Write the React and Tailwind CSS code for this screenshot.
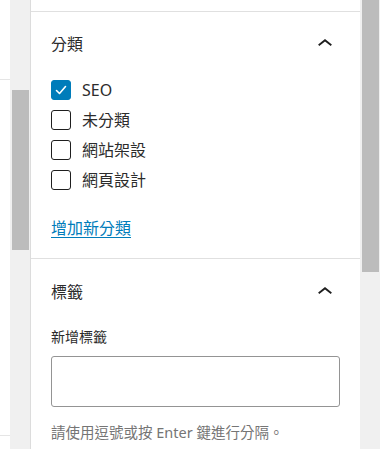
const font = { fontFamily: '"Noto Sans", "Noto Sans CJK TC", sans-serif' };

const Check = ({ checked, label }) => (
  <label className="flex items-center h-[20px] gap-[11px]">
    <span
      className={`w-[20px] h-[20px] rounded-[3px] flex items-center justify-center shrink-0 ${
        checked ? "bg-[#007cba] border border-[#007cba]" : "border-[1.5px] border-[#1e1e1e] bg-white"
      }`}
    >
      {checked && (
        <svg width="16" height="16" viewBox="0 0 16 16" fill="none">
          <path d="M3.5 8.5l3 3 6-7" stroke="#fff" strokeWidth="1.6" strokeLinecap="round" strokeLinejoin="round" />
        </svg>
      )}
    </span>
    <span className="text-[16px] leading-[20px] text-[#2c2c2c]">{label}</span>
  </label>
);

const Chevron = () => (
  <svg width="30" height="30" viewBox="0 0 24 24" className="fill-[#1e1e1e]">
    <path d="M6.5 12.4L12 8l5.5 4.4-.9 1.2L12 10l-4.6 3.6-.9-1.2z" />
  </svg>
);

const PanelHead = ({ title }) => (
  <div className="flex items-center justify-between h-[24px] pr-[20px]">
    <span className="text-[16px] leading-[24px] text-[#2c2c2c]">{title}</span>
    <Chevron />
  </div>
);

export default function App() {
  return (
    <div className="w-[380px] h-[449px] overflow-hidden flex bg-white" style={font}>
      {/* left edge of the editor canvas */}
      <div className="w-[10px] flex flex-col">
        <div className="h-[80px] border-b border-[#e5e5e5]" />
        <div className="h-[356px] border-b border-[#e5e5e5]" />
      </div>
      {/* canvas scrollbar */}
      <div className="w-[20px] bg-[#f0f0f0] pt-[90px] pl-[2px]">
        <div className="w-[17px] h-[160px] bg-[#bcbcbc]" />
      </div>
      {/* sidebar */}
      <div className="w-[330px] border-l border-[#dcdcdc] flex flex-col">
        <div className="h-[12px] border-b border-[#e0e0e0] shrink-0" />
        <section className="pl-[20px] pt-[20px] pb-[20px] border-b border-[#e0e0e0]">
          <PanelHead title="分類" />
          <div className="mt-[24px] flex flex-col gap-[10px]">
            <Check checked label="SEO" />
            <Check label="未分類" />
            <Check label="網站架設" />
            <Check label="網頁設計" />
          </div>
          <a href="#" className="block mt-[28px] text-[16px] leading-[20px] text-[#007cba] underline underline-offset-[3px]">
            增加新分類
          </a>
        </section>
        <section className="pl-[20px] pt-[21px]">
          <PanelHead title="標籤" />
          <div className="mt-[23px] text-[14px] leading-[20px] text-[#2c2c2c]">新增標籤</div>
          <div className="mt-[9px] w-[289px] h-[51px] border border-[#949494] rounded-[3px]" />
          <p className="mt-[15px] text-[14.5px] leading-[20px] text-[#757575]">請使用逗號或按 Enter 鍵進行分隔。</p>
        </section>
      </div>
      {/* sidebar scrollbar */}
      <div className="w-[20px] bg-[#f0f0f0] pl-[2px]">
        <div className="w-[17px] h-[272px] bg-[#bcbcbc]" />
      </div>
    </div>
  );
}
